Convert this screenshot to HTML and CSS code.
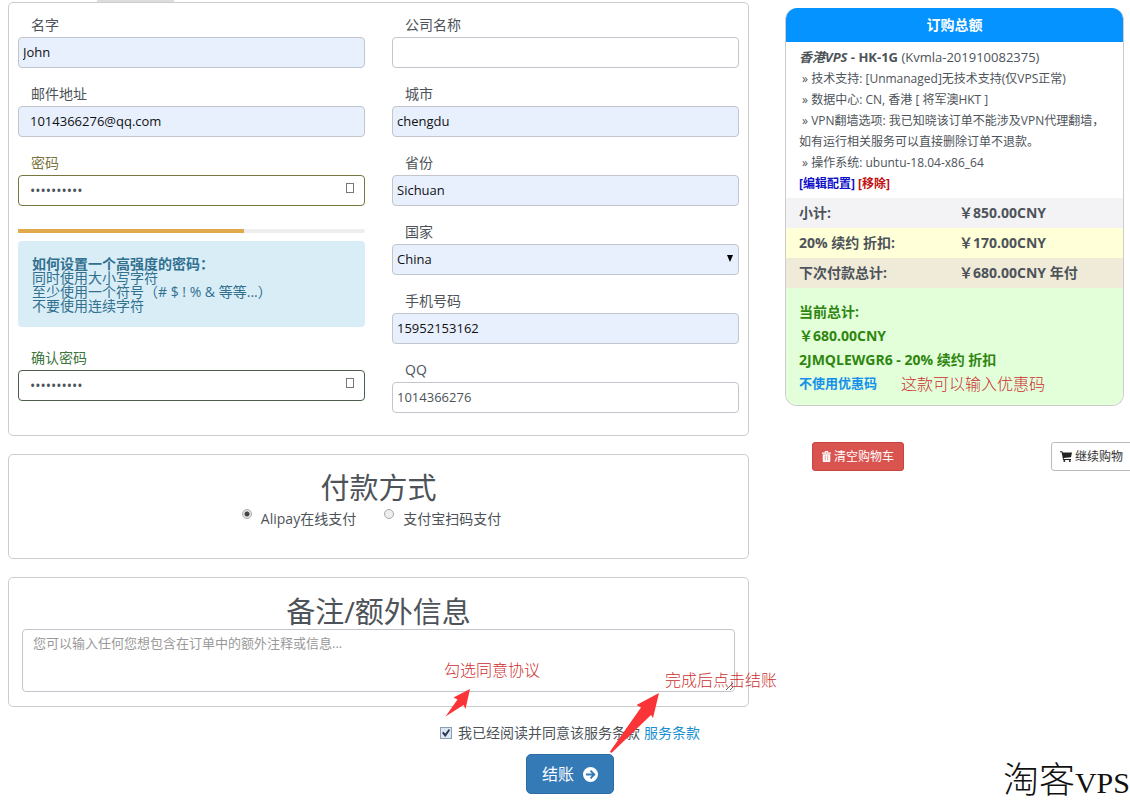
FILE: index.html
```html
<!DOCTYPE html>
<html lang="zh-CN">
<head>
<meta charset="utf-8">
<title>结账</title>
<link rel="stylesheet" href="styles.css">
</head>
<body>
<div class="page">
  <div class="tab-edge"><span></span></div>
  <div class="columns">
    <main class="main">
      <section class="card details">
        <div class="col">
          <div class="field"><label for="name">名字</label><input class="filled" id="name" value="John"></div>
          <div class="field"><label for="email">邮件地址</label><input class="filled wide" id="email" value="1014366276@qq.com"></div>
          <div class="field olive"><label for="pw">密码</label>
            <div class="control"><input class="wide" id="pw" type="password" value="abcdefghij"><span class="mark"></span></div></div>
          <div class="strength"><div class="strength-fill"></div></div>
          <div class="tips"><strong>如何设置一个高强度的密码：</strong><span>同时使用大小写字符</span><span>至少使用一个符号（# $ ! % &amp; 等等...）</span><span>不要使用连续字符</span></div>
          <div class="field green"><label for="pw2">确认密码</label>
            <div class="control"><input class="wide" id="pw2" type="password" value="abcdefghij"><span class="mark"></span></div></div>
        </div>
        <div class="col">
          <div class="field"><label for="company">公司名称</label><input id="company"></div>
          <div class="field"><label for="city">城市</label><input class="filled" id="city" value="chengdu"></div>
          <div class="field"><label for="state">省份</label><input class="filled" id="state" value="Sichuan"></div>
          <div class="field"><label for="country">国家</label>
            <div class="control"><select class="filled" id="country"><option>China</option></select><svg class="caret" viewBox="0 0 6 7" aria-hidden="true"><path d="M0 0h6L3 7z"/></svg></div></div>
          <div class="field"><label for="phone">手机号码</label><input class="filled" id="phone" value="15952153162"></div>
          <div class="field"><label for="qq">QQ</label><input id="qq" value="1014366276"></div>
        </div>
      </section>
      <section class="card payment">
        <h2>付款方式</h2>
        <div class="options">
          <label><input type="radio" name="pay" checked><span>Alipay在线支付</span></label>
          <label><input type="radio" name="pay"><span>支付宝扫码支付</span></label>
        </div>
      </section>
      <section class="card notes">
        <h2 id="notes-title">备注/额外信息</h2>
        <textarea aria-labelledby="notes-title" placeholder="您可以输入任何您想包含在订单中的额外注释或信息..."></textarea>
      </section>
    </main>
    <aside class="side">
      <section class="summary">
        <h3>订购总额</h3>
        <div class="product">
          <div class="product-name"><strong><em>香港VPS</em> - HK-1G</strong> (Kvmla-201910082375)</div>
          <div>&nbsp;» 技术支持: [Unmanaged]无技术支持(仅VPS正常)</div>
          <div>&nbsp;» 数据中心: CN, 香港 [ 将军澳HKT ]</div>
          <div>&nbsp;» VPN翻墙选项: 我已知晓该订单不能涉及VPN代理翻墙，<br>如有运行相关服务可以直接删除订单不退款。</div>
          <div>&nbsp;» 操作系统: ubuntu-18.04-x86_64</div>
          <div class="actions"><a class="edit" href="#">[编辑配置]</a> <a class="remove" href="#">[移除]</a></div>
        </div>
        <div class="row subtotal"><span>小计:</span><span>￥850.00CNY</span></div>
        <div class="row discount"><span>20% 续约 折扣:</span><span>￥170.00CNY</span></div>
        <div class="row next"><span>下次付款总计:</span><span>￥680.00CNY 年付</span></div>
        <div class="total">
          <div>当前总计:</div>
          <div>￥680.00CNY</div>
          <div>2JMQLEWGR6 - 20% 续约 折扣</div>
          <div class="coupon"><a href="#">不使用优惠码</a><span class="hint">这款可以输入优惠码</span></div>
        </div>
      </section>
      <div class="cart-buttons">
        <button class="btn danger" type="button"><svg width="9" height="11" viewBox="0 0 10 12" aria-hidden="true"><path fill="#fff" fill-rule="evenodd" d="M3 1.5V.5Q3 0 3.500 0h3Q7 0 7 .5v1h3V3H0V1.500zM4 1v.5h2V1zM.8 3.600h8.400V11q0 1-1 1H1.800q-1 0-1-1zM3.200 5v5.500h.6V5zm3 0v5.500h.6V5z"/></svg>清空购物车</button>
        <button class="btn plain" type="button"><svg width="12" height="11" viewBox="0 0 12 11" aria-hidden="true"><path fill="#222" d="M0 .3h2.300l.5 1.200H12l-1 4.800-7.300.8.2.8H11v1H3.100L1.600 1.300H0z"/><circle cx="4.300" cy="10" r="1" fill="#222"/><circle cx="9.800" cy="10" r="1" fill="#222"/></svg>继续购物</button>
      </div>
    </aside>
  </div>
  <div class="finish">
    <div class="terms"><label><input type="checkbox" checked><span>我已经阅读并同意该服务条款</span></label><a href="#">服务条款</a></div>
    <button class="checkout" type="button">结账<svg width="15" height="15" viewBox="0 0 15 15" aria-hidden="true"><circle cx="7.500" cy="7.500" r="7.500" fill="#fff"/><path d="M3 7.500h8M7.500 3.700l3.800 3.800-3.800 3.800" fill="none" stroke="#337ab7" stroke-width="1.900"/></svg></button>
  </div>
  <span class="hint agree-hint">勾选同意协议</span>
  <svg class="agree-arrow" viewBox="0 0 26 28" aria-hidden="true"><path fill="#fb3438" d="M25 0 8.500 8.500l4 2L.5 27.500 18.500 16l2 4z"/></svg>
  <span class="hint pay-hint">完成后点击结账</span>
  <svg class="pay-arrow" viewBox="0 0 50 60" aria-hidden="true"><path fill="#fb3438" d="M49 0 26.500 12l4.500 2.500L0 58.500q.3 1.500 2 1L41 22l2 3z"/></svg>
</div>
<div class="watermark">淘客<span>VPS</span></div>
</body>
</html>
```
FILE: styles.css
```css
* { box-sizing: border-box; }
body {
  margin: 0;
  background: #fff;
  color: #4d5359;
  font: 14px/20px "Open Sans", "Noto Sans CJK SC", sans-serif;
  overflow-x: hidden;
}
input, select, textarea, button { font: inherit; color: inherit; margin: 0; }
a { text-decoration: none; }
h2, h3 { margin: 0; }

.page { position: relative; }
.tab-edge { height: 2px; padding-left: 97px; }
.tab-edge span { display: block; width: 77px; height: 2px; background: #ddd; }
.columns {
  display: grid;
  grid-template-columns: minmax(0, 741fr) minmax(0, 339fr);
  gap: 36px;
  padding: 0 6px 0 8px;
  align-items: start;
}
.main { display: flex; flex-direction: column; gap: 18px; }
.card { border: 1px solid #ccc; border-radius: 5px; }

.details {
  display: grid;
  grid-template-columns: 1fr 1fr;
  gap: 27px;
  padding: 12px 9px 22px;
}
.col { display: flex; flex-direction: column; }
.field { display: flex; flex-direction: column; gap: 2px; }
.field + .field { margin-top: 16px; }
.field label { padding-left: 13px; }
.field input, .field select {
  width: 100%;
  height: 31px;
  padding: 0 4px 1px;
  border: 1px solid #c2c6cc;
  border-radius: 4px;
  background: #fff;
  font-size: 13px;
  appearance: none;
  display: block;
}
.field .filled { background: #e8f0fe; color: #111; }
.field input.wide { padding-left: 11px; }
.field input[type="password"] { font-size: 14px; }
.control { position: relative; }
.mark {
  position: absolute;
  right: 11px;
  top: 8px;
  width: 8px;
  height: 10px;
  border: 1px solid #777;
}
.caret { position: absolute; right: 6px; top: 11px; width: 6px; height: 7px; }
.olive label { color: #7b7440; }
.olive input { border-color: #77763f; }
.green label { color: #3c763d; }
.green input { border-color: #4c5d4c; }

.strength { height: 4px; margin: 23px 0 8px; background: #eee; border-radius: 2px; }
.strength-fill { width: 65%; height: 4px; background: #e0a94c; }
.tips {
  display: flex;
  flex-direction: column;
  margin-bottom: 21px;
  padding: 16px 14px 14px;
  border-radius: 4px;
  background: #d9edf7;
  color: #31708f;
  line-height: 14px;
}

.card h2 { font-size: 29px; line-height: 34px; font-weight: 400; text-align: center; }
.payment { padding: 16px 9px 25px; }
.options { display: flex; justify-content: center; gap: 28px; padding-right: 14px; }
.options label { display: flex; gap: 9px; line-height: 28px; }
.options input {
  appearance: none;
  width: 10px;
  height: 10px;
  margin-top: 4px;
  border: 1px solid #aaa;
  border-radius: 50%;
  background: #eee;
}
.options input:checked { background: radial-gradient(#444 0 2px, #e6e6e6 3px); }
.notes { padding: 17px 13px 14px; }
.notes textarea {
  display: block;
  width: 100%;
  height: 63px;
  padding: 4px 10px;
  border: 1px solid #c2c6cc;
  border-radius: 4px;
  font-size: 13px;
  line-height: 18px;
}
.notes textarea::placeholder { color: #999; }

.side { padding-top: 6px; }
.summary { border: 1px solid #ccc; border-top: 0; border-radius: 12px; overflow: hidden; }
.summary h3 {
  margin: 0 -1px;
  background: #0593ff;
  color: #fff;
  font-size: 14px;
  line-height: 34px;
  text-align: center;
}
.product { padding: 5px 0 4px 13px; font-size: 12px; line-height: 21px; white-space: nowrap; }
.product-name { font-size: 13px; }
.actions { font-weight: 700; }
.edit { color: #1010c8; }
.remove { color: #c01010; }
.row {
  display: grid;
  grid-template-columns: 160px 1fr;
  padding-left: 13px;
  line-height: 30px;
  font-weight: 700;
}
.subtotal { background: #f3f3f5; }
.discount { background: #ffffd8; }
.next { background: #f0ebd9; }
.total {
  padding: 12px 0 9px 13px;
  background: #e2ffda;
  color: #2f860f;
  font-weight: 700;
  line-height: 24px;
}
.coupon { display: flex; gap: 24px; font-size: 13px; line-height: 22px; }
.coupon a { color: #1490ea; }
.hint { color: #cc3030; font-size: 16px; font-weight: 300; line-height: 24px; white-space: nowrap; }

.cart-buttons { display: flex; justify-content: space-between; margin: 36px -19px 0 27px; }
.btn {
  display: flex;
  align-items: center;
  gap: 3px;
  height: 29px;
  padding: 0 9px;
  border: 1px solid #bbb;
  border-radius: 3px;
  font-size: 12px;
  white-space: nowrap;
}
.danger { background: #d9534f; border-color: #c9433f; color: #fff; }
.plain { width: 92px; padding: 0 8px; background: #fff; color: #333; }

.finish {
  display: flex;
  flex-direction: column;
  align-items: center;
  gap: 11px;
  padding: 16px 0 6px 10px;
}
.terms, .terms label { display: flex; align-items: center; }
.terms { gap: 4px; }
.terms label { gap: 6px; }
.terms input {
  appearance: none;
  width: 12px;
  height: 12px;
  border: 1px solid #8d9cb0;
  background: #dbe6f3;
  display: grid;
  place-items: center;
}
.terms input:checked::before {
  content: "";
  width: 8px;
  height: 8px;
  background: #26344f;
  clip-path: polygon(0 50%, 20% 35%, 40% 60%, 85% 0, 100% 15%, 42% 100%);
}
.terms a { color: #1a8fd0; }
.checkout {
  display: flex;
  align-items: center;
  gap: 9px;
  height: 40px;
  padding: 0 15px;
  border: 1px solid #2e6da4;
  border-radius: 5px;
  background: #337ab7;
  color: #fff;
  font-size: 16px;
}

/* Callouts lying over the form */
.agree-hint, .pay-hint, .agree-arrow, .pay-arrow { position: absolute; }
.agree-hint { left: 444px; top: 658px; }
.agree-arrow { left: 445px; top: 689px; width: 26px; height: 28px; }
.pay-hint { left: 665px; top: 668px; }
.pay-arrow { left: 610px; top: 693px; width: 50px; height: 60px; }
.watermark {
  position: absolute;
  right: 0;
  top: 759px;
  color: #111;
  font: 300 36px/44px "Liberation Serif", "Noto Sans CJK SC", serif;
}
.watermark span { font-size: 30px; }
```
